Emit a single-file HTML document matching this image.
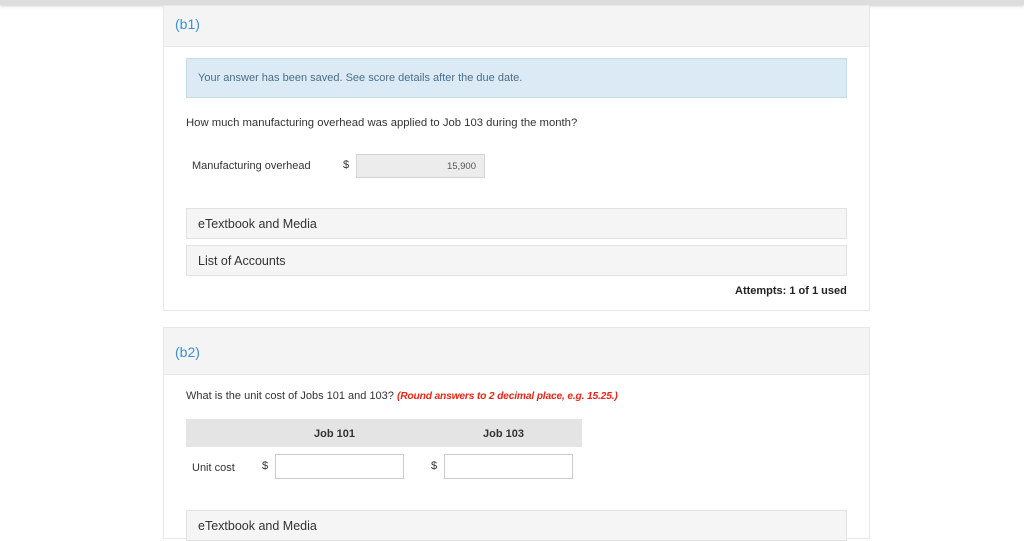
<!DOCTYPE html>
<html><head><style>
body{margin:0;width:1024px;height:523px;overflow:hidden;background:#fff;font-family:"Liberation Sans",sans-serif;color:#333;position:relative}
.top{position:absolute;left:0;top:0;width:1024px;height:5px;background:#ddd;box-shadow:0 1px 3px #ccc}
.card{position:absolute;left:163px;width:705px;border:1px solid #e8e8e8;background:#fff}
.hd{background:#f4f4f4;border-bottom:1px solid #e6e6e6;color:#3d8fd6;font-size:14px;padding-left:11px;box-sizing:border-box}
.a{position:absolute;font-size:11px}
.box{position:absolute;background:#f5f5f5;border:1px solid #e2e2e2;box-sizing:border-box;font-size:12.5px;padding-left:11px}
.inp{position:absolute;border:1px solid #ccc;background:#fff;box-sizing:border-box}
</style></head><body>
<div class="top"></div>
<div class="card" style="top:5px;height:304px">
 <div class="hd" style="height:41px;padding-top:10px">(b1)</div>
</div>
<div style="position:absolute;left:186px;top:58px;width:661px;height:40px;background:#dceaf5;border:1px solid #c3dced;box-sizing:border-box;color:#4a6f8a;font-size:11px;padding:13px 0 0 11px">Your answer has been saved. See score details after the due date.</div>
<div class="a" style="left:186px;top:117px;font-size:11.3px">How much manufacturing overhead was applied to Job 103 during the month?</div>
<div class="a" style="left:192px;top:160px">Manufacturing overhead</div>
<div class="a" style="left:343px;top:159px">$</div>
<div style="position:absolute;left:356px;top:154px;width:129px;height:24px;background:#ececec;border:1px solid #d4d4d4;box-sizing:border-box;font-size:9.5px;color:#555;text-align:right;padding:6px 8px 0 0">15,900</div>
<div class="box" style="left:186px;top:208px;width:661px;height:31px;padding-top:8px">eTextbook and Media</div>
<div class="box" style="left:186px;top:245px;width:661px;height:31px;padding-top:8px">List of Accounts</div>
<div class="a" style="left:735px;top:285px;font-weight:bold;color:#222">Attempts: 1 of 1 used</div>
<div class="card" style="top:327px;height:210px">
 <div class="hd" style="height:47px;padding-top:16px">(b2)</div>
</div>
<div class="a" style="left:186px;top:390px">What is the unit cost of Jobs 101 and 103? <b style="color:#e8261a;font-style:italic;font-size:10.3px;letter-spacing:-0.2px">(Round answers to 2 decimal place, e.g. 15.25.)</b></div>
<div style="position:absolute;left:186px;top:419px;width:396px;height:28px;background:#e4e4e4"></div>
<div class="a" style="left:314px;top:428px;font-weight:bold">Job 101</div>
<div class="a" style="left:483px;top:428px;font-weight:bold">Job 103</div>
<div class="a" style="left:192px;top:462px">Unit cost</div>
<div class="a" style="left:262px;top:460px">$</div>
<div class="inp" style="left:275px;top:454px;width:129px;height:25px"></div>
<div class="a" style="left:431px;top:460px">$</div>
<div class="inp" style="left:444px;top:454px;width:129px;height:25px"></div>
<div class="box" style="left:186px;top:510px;width:661px;height:31px;padding-top:8px">eTextbook and Media</div>
</body></html>
